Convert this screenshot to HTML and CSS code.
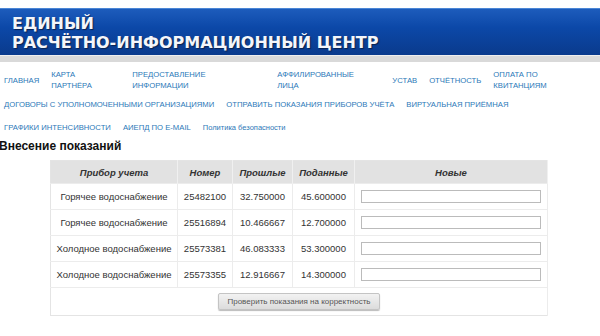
FILE: index.html
```html
<!doctype html>
<html lang="ru">
  <head>
    <meta charset="UTF-8" />
    <title>Внесение показаний</title>
    <link rel="stylesheet" href="styles.css">
  </head>
  <body>
    <div class="header">
      <div class="logo">ЕДИНЫЙ<br />РАСЧЁТНО-ИНФОРМАЦИОННЫЙ ЦЕНТР</div>
    </div>
    <div class="header-line"></div>

    <div class="menu">
      <div class="menu-row">
        <a href="#">Главная</a>
        <a href="#" class="w-card">Карта<br />партнёра</a>
        <a href="#" class="w-info">Предоставление<br />информации</a>
        <a href="#" class="w-aff">Аффилированные<br />лица</a>
        <a href="#">Устав</a>
        <a href="#">Отчётность</a>
        <a href="#" class="w-pay">Оплата по<br />квитанциям</a>
      </div>
      <div class="menu-row">
        <a href="#">Договоры с уполномоченными организациями</a>
        <a href="#">Отправить показания приборов учёта</a>
        <a href="#">Виртуальная приёмная</a>
      </div>
      <div class="menu-row">
        <a href="#">Графики интенсивности</a>
        <a href="#">АИЕПД по e-mail</a>
        <a href="#" class="plain">Политика безопасности</a>
      </div>
    </div>

    <h1 class="page-title">Внесение показаний</h1>

    <form class="readings">
      <table>
        <colgroup>
          <col class="c-name" />
          <col class="c-num" />
          <col class="c-old" />
          <col class="c-sent" />
          <col class="c-new" />
        </colgroup>
        <tr>
          <th>Прибор учета</th>
          <th>Номер</th>
          <th>Прошлые</th>
          <th>Поданные</th>
          <th>Новые</th>
        </tr>
        <tr>
          <td>Горячее водоснабжение</td>
          <td>25482100</td>
          <td>32.750000</td>
          <td>45.600000</td>
          <td><input type="text" /></td>
        </tr>
        <tr>
          <td>Горячее водоснабжение</td>
          <td>25516894</td>
          <td>10.466667</td>
          <td>12.700000</td>
          <td><input type="text" /></td>
        </tr>
        <tr>
          <td>Холодное водоснабжение</td>
          <td>25573381</td>
          <td>46.083333</td>
          <td>53.300000</td>
          <td><input type="text" /></td>
        </tr>
        <tr>
          <td>Холодное водоснабжение</td>
          <td>25573355</td>
          <td>12.916667</td>
          <td>14.300000</td>
          <td><input type="text" /></td>
        </tr>
        <tr>
          <td colspan="5" class="actions">
            <button type="button">Проверить показания на корректность</button>
          </td>
        </tr>
      </table>
    </form>
  </body>
</html>
```

FILE: styles.css
```css
body {
  margin: 0;
  padding: 0;
  font-family: "Liberation Sans", Arial, sans-serif;
  color: #333;
  background: white;
}

.header {
  margin-top: 8px;
  height: 47px;
  background: linear-gradient(#1d5cbc, #0c48a8 40%, #0a3a8c);
  border-top: 1px solid #4a86d6;
  box-sizing: border-box;
}

.logo {
  padding: 5px 0 0 12px;
  font-family: "DejaVu Sans", Verdana, sans-serif;
  font-weight: bold;
  font-size: 16px;
  line-height: 19px;
  color: #f4f6fa;
  text-shadow: 1px 1px 1px #0a2350;
}

.header-line {
  height: 6px;
  background: #d9d9d9;
  border-top: 1px solid #eee;
}

.menu {
  padding: 5px 0 0 4px;
}

.menu-row {
  display: flex;
  align-items: center;
  gap: 12px;
  min-height: 23px;
}

.menu-row:first-child {
  min-height: 26px;
}

.menu a {
  color: #2b78b8;
  text-decoration: none;
  text-transform: uppercase;
  font-size: 7.7px;
  line-height: 11px;
}

.menu a.plain {
  text-transform: none;
  font-size: 7.5px;
}

.w-card {
  width: 69px;
}

.w-info {
  width: 133px;
}

.w-aff {
  width: 103px;
}

.w-pay {
  width: 80px;
}

.page-title {
  margin: -1px 0 0 -1px;
  font-size: 12px;
  line-height: 16px;
  color: #111;
}

.readings {
  margin: 6px 0 0 50px;
}

table {
  table-layout: fixed;
  width: 498px;
  border-collapse: collapse;
  border: 1px solid #e4e4e4;
  font-size: 9.5px;
}

.c-name {
  width: 127px;
}

.c-num {
  width: 55px;
}

.c-old {
  width: 60px;
}

.c-sent {
  width: 62px;
}

th {
  background: #e2e2e2;
  font-style: italic;
  font-weight: bold;
  height: 22px;
  padding: 0;
  border-right: 1px solid #f0f0f0;
}

td {
  height: 25px;
  padding: 0;
  text-align: center;
  white-space: nowrap;
  border-top: 1px solid #ececec;
  border-right: 1px solid #ececec;
}

input {
  width: 180px;
  height: 13px;
  box-sizing: border-box;
  border: 1px solid #bbb;
  border-radius: 0;
  padding: 0;
  margin: 0;
}

.actions {
  height: 27px;
}

button {
  font-family: "Liberation Sans", Arial, sans-serif;
  font-size: 8px;
  color: #555;
  height: 17px;
  padding: 0 8px;
  border: 1px solid #c4c4c4;
  border-radius: 2px;
  background: linear-gradient(#f2f2f2, #dcdcdc);
  box-shadow: 0 1px 1px #bbb;
}
```
